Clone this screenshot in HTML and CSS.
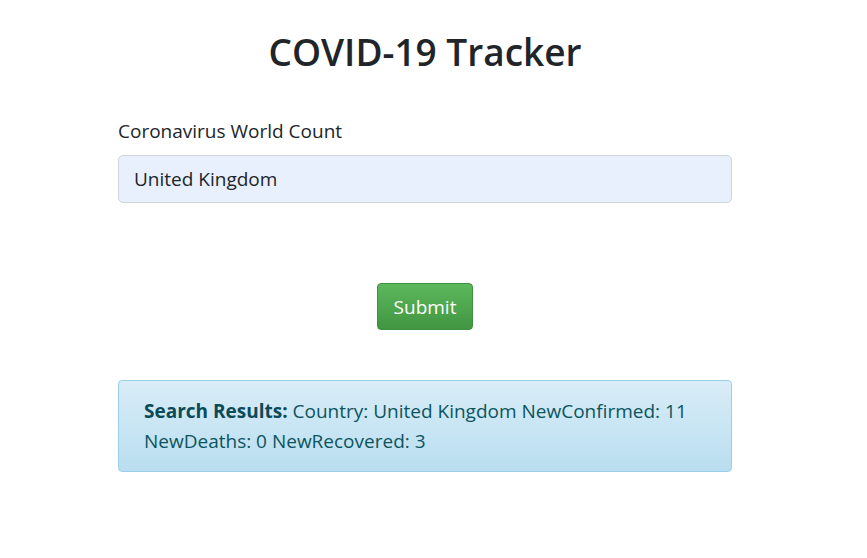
FILE: index.html
```html
<!DOCTYPE html>
<html lang="en">
<head>
<meta charset="utf-8">
<title>COVID-19 Tracker</title>
<link rel="stylesheet" href="styles.css">
</head>
<body>
<div class="page">
  <main class="container">
    <h1 class="title">COVID-19 Tracker</h1>
    <form class="form">
      <label class="label" for="country">Coronavirus World Count</label>
      <input class="input" id="country" type="text" value="United Kingdom">
      <div class="actions">
        <button class="btn" type="button">Submit</button>
      </div>
    </form>
    <div class="alert"><strong>Search Results:</strong> Country: United Kingdom NewConfirmed: 11 NewDeaths: 0 NewRecovered: 3</div>
  </main>
</div>
</body>
</html>
```
FILE: styles.css
```css
* { box-sizing: border-box; }
html, body { margin: 0; padding: 0; background: #fff; }
body {
  font-family: "Open Sans", "Noto Sans", sans-serif;
  font-size: 19px;
  line-height: 30px;
  color: #212529;
}
.page { width: 850px; }
.container {
  width: 614px;
  margin: 0 auto;
  padding-top: 28px;
  display: flex;
  flex-direction: column;
}
.title {
  margin: 0;
  text-align: center;
  font-size: 37px;
  line-height: 48px;
  font-weight: 600;
  color: #212529;
}
.form {
  display: flex;
  flex-direction: column;
  margin-top: 40px;
}
.label {
  display: block;
  font-size: 19px;
  line-height: 30px;
  margin-bottom: 9px;
}
.input {
  height: 48px;
  width: 100%;
  padding: 8px 15px;
  font-family: inherit;
  font-size: 19px;
  color: #212529;
  background: #e8f0fe;
  border: 1px solid #ced4da;
  border-radius: 5px;
  outline: none;
}
.actions {
  display: flex;
  justify-content: center;
  margin-top: 80px;
}
.btn {
  height: 47px;
  width: 96px;
  padding: 0;
  font-family: inherit;
  font-size: 19px;
  color: #fff;
  background: linear-gradient(to bottom, #5cb85c 0%, #419641 100%);
  border: 1px solid #3e8f3e;
  border-radius: 4px;
  cursor: pointer;
}
.alert {
  margin-top: 50px;
  padding: 15px 25px;
  font-size: 19px;
  line-height: 30px;
  color: #0c5460;
  background: linear-gradient(to bottom, #d9edf7 0%, #b9def0 100%);
  border: 1px solid #9acfea;
  border-radius: 4px;
}
.alert strong { font-weight: 700; color: #0c4a57; }
```
